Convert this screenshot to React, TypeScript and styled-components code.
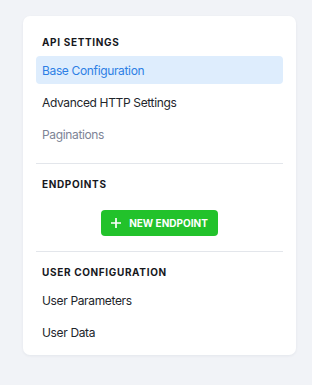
import styled, { createGlobalStyle } from "styled-components";

const GlobalStyle = createGlobalStyle`
  html, body {
    margin: 0;
    padding: 0;
    background: #f1f3f7;
    font-family: Inter, "Noto Sans", sans-serif;
  }
`;

const Page = styled.div`
  padding: 16px 16px 32px 23px;
`;

const Card = styled.nav`
  width: 273px;
  box-sizing: border-box;
  background: #fff;
  border-radius: 7px;
  box-shadow: 0 1px 3px rgba(20, 30, 60, 0.06);
  padding: 16px 13px 9px;
`;

const Section = styled.div<{ $last?: boolean }>`
  display: flex;
  flex-direction: column;
  gap: 4px;
  padding-bottom: ${(p) => (p.$last ? "0" : "15px")};
  border-bottom: ${(p) => (p.$last ? "none" : "1px solid #e3e6eb")};
  & + & {
    padding-top: 10px;
  }
`;

const Heading = styled.h3`
  margin: 0;
  height: 20px;
  line-height: 20px;
  padding: 0 6px;
  font-size: 10px;
  font-weight: 700;
  letter-spacing: 0.65px;
  text-transform: uppercase;
  color: #16181d;
`;

const Item = styled.a<{ $active?: boolean; $muted?: boolean }>`
  display: flex;
  align-items: center;
  height: 28px;
  padding: 0 6px;
  border-radius: 4px;
  font-size: 12px;
  letter-spacing: -0.35px;
  text-decoration: none;
  cursor: pointer;
  background: ${(p) => (p.$active ? "#deedfd" : "transparent")};
  color: ${(p) => (p.$active ? "#2d7fe5" : p.$muted ? "#7d8496" : "#22252b")};
`;

const ButtonRow = styled.div`
  display: flex;
  justify-content: center;
  padding-top: 12px;
`;

const AddButton = styled.button`
  display: inline-flex;
  align-items: center;
  gap: 8px;
  height: 26px;
  padding: 0 10px;
  border: none;
  border-radius: 4px;
  background: #22c22b;
  color: #fff;
  font-family: inherit;
  font-size: 10px;
  font-weight: 700;
  letter-spacing: 0;
  white-space: nowrap;
  cursor: pointer;
`;

const PlusIcon = () => (
  <svg width="10" height="10" viewBox="0 0 10 10" fill="none">
    <path d="M5 0v10M0 5h10" stroke="#fff" strokeWidth="1.7" />
  </svg>
);

export default function App() {
  return (
    <Page>
      <GlobalStyle />
      <Card>
        <Section>
          <Heading>API Settings</Heading>
          <Item $active>Base Configuration</Item>
          <Item>Advanced HTTP Settings</Item>
          <Item $muted>Paginations</Item>
        </Section>
        <Section>
          <Heading>Endpoints</Heading>
          <ButtonRow>
            <AddButton>
              <PlusIcon />
              NEW ENDPOINT
            </AddButton>
          </ButtonRow>
        </Section>
        <Section $last>
          <Heading>User Configuration</Heading>
          <Item>User Parameters</Item>
          <Item>User Data</Item>
        </Section>
      </Card>
    </Page>
  );
}
